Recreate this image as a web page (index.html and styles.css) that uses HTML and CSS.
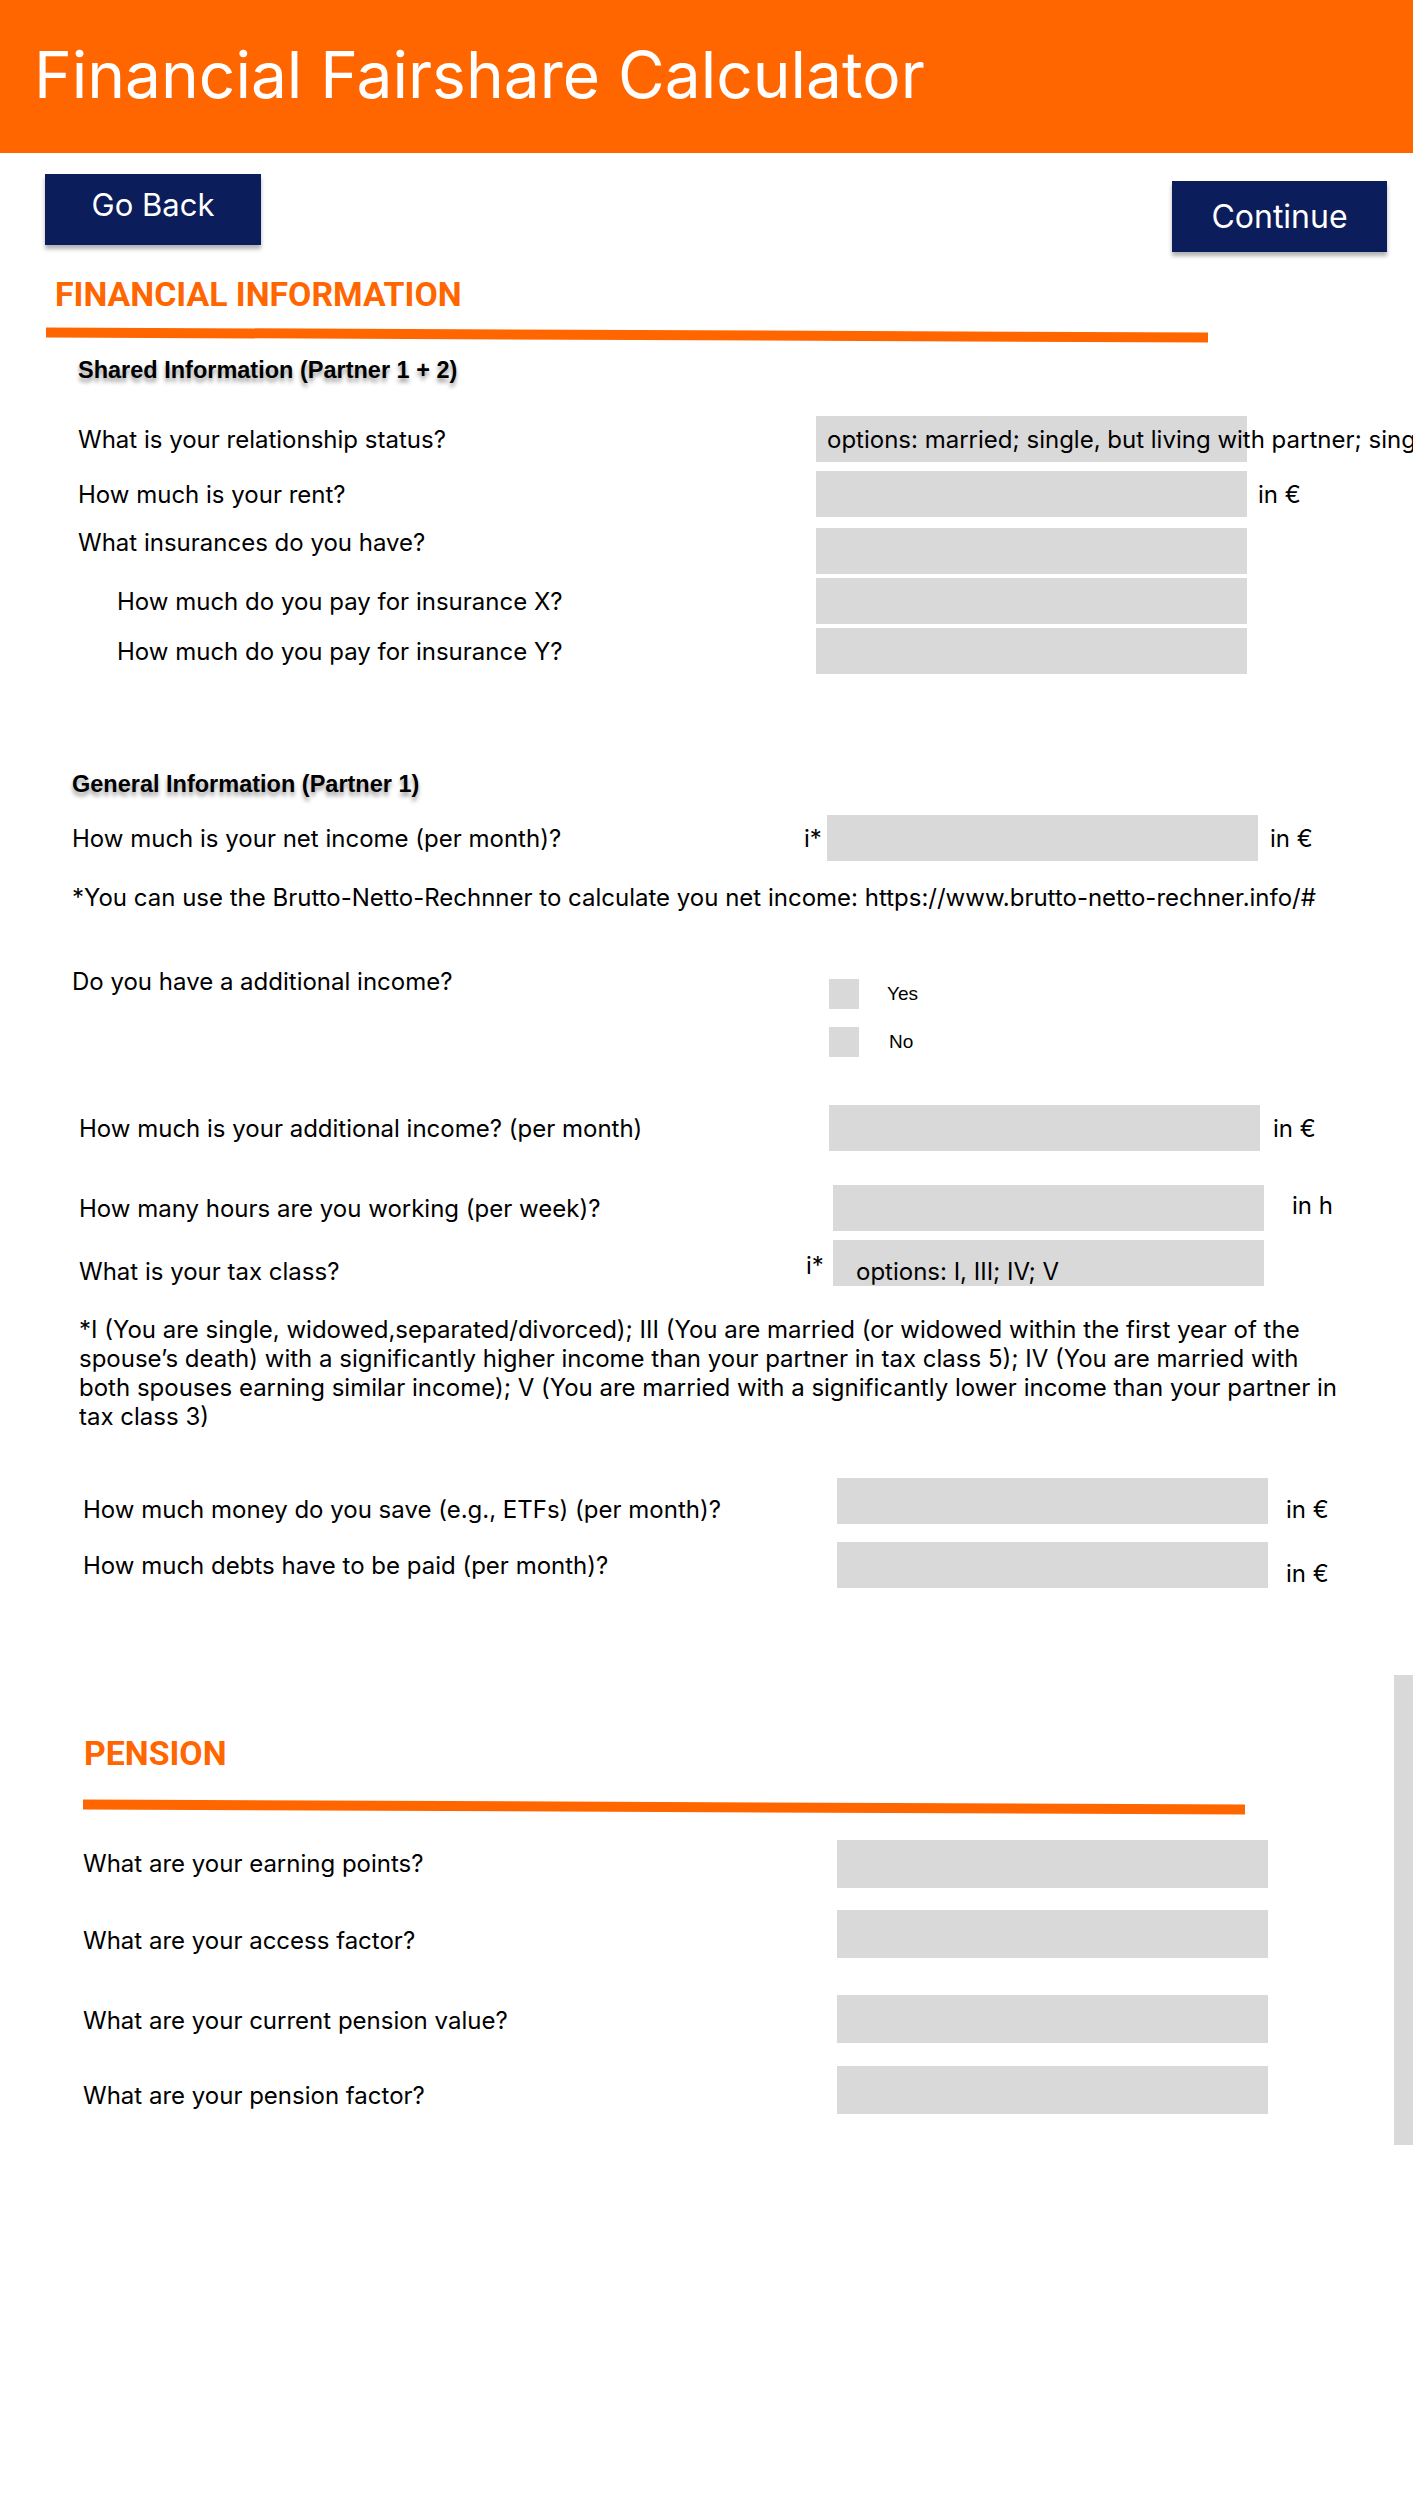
FILE: index.html
```html
<!DOCTYPE html>
<html lang="en">
<head>
  <meta charset="UTF-8">
  <meta name="viewport" content="width=device-width, initial-scale=1.0">
  <title>Financial Fairshare Calculator</title>
  <link rel="stylesheet" href="styles.css">
</head>
<body>

<header class="topbar">
  <h1 class="topbar-title">Financial Fairshare Calculator</h1>
</header>

<main class="page">

  <div class="actions">
    <button class="btn btn-back">Go Back</button>
    <button class="btn btn-next">Continue</button>
  </div>

  <h2 class="section-title section-title--finance">FINANCIAL INFORMATION</h2>
  <div class="rule rule--finance"></div>

  <!-- shared -->
  <section class="group group--shared">
    <h3 class="group-title">Shared Information (Partner 1 + 2)</h3>

    <div class="row mt-32">
      <span class="label">What is your relationship status?</span>
      <span class="marker"></span>
      <div class="field field--text">options: married; single, but living with partner; single</div>
      <span class="unit"></span>
    </div>
    <div class="row mt-9">
      <span class="label">How much is your rent?</span>
      <span class="marker"></span>
      <div class="field"></div>
      <span class="unit">in €</span>
    </div>
    <div class="row mt-11">
      <span class="label label--top">What insurances do you have?</span>
      <span class="marker"></span>
      <div class="field"></div>
      <span class="unit"></span>
    </div>
    <div class="row mt-4">
      <span class="label label--sub">How much do you pay for insurance X?</span>
      <span class="marker"></span>
      <div class="field"></div>
      <span class="unit"></span>
    </div>
    <div class="row mt-4">
      <span class="label label--sub">How much do you pay for insurance Y?</span>
      <span class="marker"></span>
      <div class="field"></div>
      <span class="unit"></span>
    </div>
  </section>

  <!-- partner 1 -->
  <section class="group group--general">
    <h3 class="group-title">General Information (Partner 1)</h3>

    <div class="row mt-17">
      <span class="label">How much is your net income (per month)?</span>
      <span class="marker">i*</span>
      <div class="field"></div>
      <span class="unit">in €</span>
    </div>

    <p class="note mt-22">*You can use the Brutto-Netto-Rechnner to calculate you net income: https://www.brutto-netto-rechner.info/#</p>

    <div class="row row--question mt-55">
      <span class="label label--top">Do you have a additional income?</span>
      <span class="marker"></span>
      <div class="choices">
        <label class="choice"><span class="check"></span><span class="choice-text">Yes</span></label>
        <label class="choice"><span class="check"></span><span class="choice-text choice-text--no">No</span></label>
      </div>
      <span class="unit"></span>
    </div>
  </section>

  <section class="group group--work">
    <div class="row row--addl mt-48">
      <span class="label">How much is your additional income? (per month)</span>
      <span class="marker"></span>
      <div class="field"></div>
      <span class="unit">in €</span>
    </div>
    <div class="row row--hours mt-34">
      <span class="label">How many hours are you working (per week)?</span>
      <span class="marker"></span>
      <div class="field"></div>
      <span class="unit unit--top">in h</span>
    </div>
    <div class="row row--bottom mt-9">
      <span class="label">What is your tax class?</span>
      <span class="marker marker--top">i*</span>
      <div class="field field--text field--bottom">options: I, III; IV; V</div>
      <span class="unit"></span>
    </div>

    <p class="note note--tax mt-29">*I (You are single, widowed,separated/divorced); III (You are married (or widowed within the first year of the spouse’s death) with a significantly higher income than your partner in tax class 5); IV (You are married with both spouses earning similar income); V (You are married with a significantly lower income than your partner in tax class 3)</p>
  </section>

  <section class="group group--savings">
    <div class="row row--bottom mt-47">
      <span class="label">How much money do you save (e.g., ETFs) (per month)?</span>
      <span class="marker"></span>
      <div class="field"></div>
      <span class="unit">in €</span>
    </div>
    <div class="row mt-18">
      <span class="label">How much debts have to be paid (per month)?</span>
      <span class="marker"></span>
      <div class="field"></div>
      <span class="unit unit--bottom">in €</span>
    </div>
  </section>

  <!-- pension -->
  <section class="group group--pension">
    <h2 class="section-title section-title--pension">PENSION</h2>
    <div class="rule rule--pension"></div>

    <div class="row mt-28">
      <span class="label offset-9">What are your earning points?</span>
      <span class="marker"></span>
      <div class="field"></div>
      <span class="unit"></span>
    </div>
    <div class="row mt-22">
      <span class="label offset-16">What are your access factor?</span>
      <span class="marker"></span>
      <div class="field"></div>
      <span class="unit"></span>
    </div>
    <div class="row mt-37">
      <span class="label offset-11">What are your current pension value?</span>
      <span class="marker"></span>
      <div class="field"></div>
      <span class="unit"></span>
    </div>
    <div class="row mt-23">
      <span class="label offset-15">What are your pension factor?</span>
      <span class="marker"></span>
      <div class="field"></div>
      <span class="unit"></span>
    </div>
  </section>

</main>

<div class="side-track"></div>

</body>
</html>
```

FILE: styles.css
```css
* {
  margin: 0;
  padding: 0;
  box-sizing: border-box;
}
html,
body {
  overflow-x: hidden;
}
body {
  font-family: Inter, "Noto Sans", sans-serif;
  color: #000;
  background: #fff;
}

/* top bar */
.topbar {
  height: 153px;
  background: #ff6600;
  padding: 36px 0 0 34px;
}
.topbar-title {
  font-size: 64px;
  font-weight: 400;
  line-height: 77px;
  color: #fff;
}

/* buttons */
.actions {
  display: flex;
  justify-content: space-between;
  align-items: flex-start;
  padding: 21px 26px 0 45px;
}
.btn {
  display: flex;
  align-items: center;
  justify-content: center;
  height: 71px;
  border: none;
  background: #0b1d5b;
  color: #fff;
  font-family: Inter, sans-serif;
  box-shadow: 0 4px 4px rgba(0, 0, 0, 0.3);
}
.btn-back {
  width: 216px;
  font-size: 31px;
  padding-bottom: 10px;
}
.btn-next {
  width: 215px;
  font-size: 32px;
  margin-top: 7px;
}

/* headings */
.section-title {
  font-family: Roboto, sans-serif;
  font-weight: 700;
  font-size: 33.8px;
  line-height: 38px;
  color: #ff6600;
}
.section-title--finance {
  margin-top: 24px;
  padding-left: 55px;
}
.section-title--pension {
  margin-top: 147px;
  padding-left: 1px;
}
.rule {
  width: 1162px;
  height: 10px;
  background: #ff6600;
  transform: rotate(0.25deg);
}
.rule--finance {
  margin: 16px 0 0 46px;
}
.rule--pension {
  margin-top: 29px;
}
.group-title {
  font-family: "Liberation Sans", Arial, sans-serif;
  font-weight: 700;
  font-size: 23.5px;
  line-height: 27px;
  text-shadow: 0 4px 4px rgba(0, 0, 0, 0.4);
}

/* groups */
.group {
  padding-left: var(--pad);
}
.group--shared {
  --pad: 78px;
  --label-w: 738px;
  --mark-w: 0px;
  --unit-gap: 11px;
}
.group--shared .group-title {
  margin: 17px 0 0 0;
}
.group--general {
  --pad: 72px;
  --label-w: 732px;
  --mark-w: 23px;
  --unit-gap: 12px;
}
.group--general .group-title {
  margin-top: 97px;
}
.group--work {
  --pad: 79px;
  --label-w: 727px;
  --mark-w: 27px;
  --unit-gap: 13px;
}
.group--savings {
  --pad: 83px;
  --label-w: 754px;
  --mark-w: 0px;
  --unit-gap: 18px;
}
.group--pension {
  --pad: 83px;
  --label-w: 754px;
  --mark-w: 0px;
  --field-h: 48px;
}

/* rows */
.row {
  display: grid;
  grid-template-columns: var(--label-w) var(--mark-w) 431px auto;
  align-items: center;
  min-height: var(--field-h, 46px);
}
.row--addl {
  --mark-w: 23px;
}
.row--hours {
  --unit-gap: 28px;
}
.row--bottom {
  align-items: end;
}
.row--question {
  align-items: start;
}
.label,
.marker,
.unit,
.note {
  font-size: 24px;
  line-height: 29px;
}
.label--top {
  align-self: start;
}
.label--sub {
  padding-left: 39px;
}
.offset-9,
.offset-11,
.offset-15,
.offset-16 {
  align-self: start;
}
.offset-9 { margin-top: 9px; }
.offset-11 { margin-top: 11px; }
.offset-15 { margin-top: 15px; }
.offset-16 { margin-top: 16px; }
.marker--top {
  align-self: start;
  margin-top: 11px;
}
.unit {
  margin-left: var(--unit-gap);
}
.unit--top {
  align-self: start;
  margin-top: 6px;
}
.unit--bottom {
  align-self: end;
}
.field {
  height: var(--field-h, 46px);
  background: #d9d9d9;
}
.field--text {
  display: flex;
  align-items: center;
  padding-left: 11px;
  font-size: 24px;
  line-height: 29px;
  white-space: nowrap;
}
.field--bottom {
  align-items: flex-end;
  padding-left: 23px;
}

/* yes / no */
.choices {
  display: flex;
  flex-direction: column;
  gap: 18px;
  padding: 12px 0 0 2px;
}
.choice {
  display: flex;
  align-items: center;
}
.check {
  width: 30px;
  height: 30px;
  background: #d9d9d9;
}
.choice-text {
  margin-left: 28px;
  font-family: "Liberation Sans", Arial, sans-serif;
  font-size: 19px;
}
.choice-text--no {
  margin-left: 30px;
}

/* notes */
.note--tax {
  max-width: 1258px;
}

/* fake scroll track on the right */
.side-track {
  position: absolute;
  top: 1675px;
  right: 0;
  width: 19px;
  height: 470px;
  background: #d9d9d9;
}

/* spacing */
.mt-4 { margin-top: 4px; }
.mt-9 { margin-top: 9px; }
.mt-11 { margin-top: 11px; }
.mt-17 { margin-top: 17px; }
.mt-18 { margin-top: 18px; }
.mt-22 { margin-top: 22px; }
.mt-23 { margin-top: 23px; }
.mt-28 { margin-top: 28px; }
.mt-29 { margin-top: 29px; }
.mt-32 { margin-top: 32px; }
.mt-34 { margin-top: 34px; }
.mt-37 { margin-top: 37px; }
.mt-47 { margin-top: 47px; }
.mt-48 { margin-top: 48px; }
.mt-55 { margin-top: 55px; }
```
